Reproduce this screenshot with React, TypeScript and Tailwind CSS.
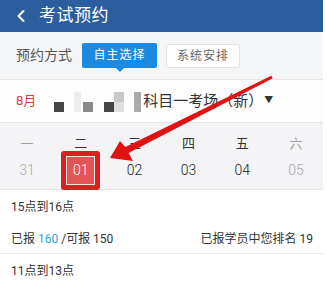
import { ChevronLeft } from 'lucide-react';

const weekdays = [
  { label: '一', tone: 'text-[#a0a0a0]' },
  { label: '二', tone: 'text-[#333]' },
  { label: '三', tone: 'text-[#333]' },
  { label: '四', tone: 'text-[#333]' },
  { label: '五', tone: 'text-[#333]' },
  { label: '六', tone: 'text-[#a0a0a0]' },
];

const dates = ['31', '01', '02', '03', '04', '05'];

function CensorBlocks() {
  // pixelated name that was blurred out in the original screenshot
  return (
    <svg width="88" height="20" viewBox="0 0 88 20" className="shrink-0">
      <rect x="0" y="10" width="10" height="10" fill="#444" />
      <rect x="20" y="0" width="7" height="20" fill="#eee" />
      <rect x="29" y="10" width="10" height="10" fill="#8a8a8a" />
      <rect x="50" y="10" width="10" height="10" fill="#444" />
      <rect x="60" y="0" width="10" height="10" fill="#c8c8c8" />
      <rect x="60" y="10" width="10" height="10" fill="#dedede" />
      <rect x="80" y="0" width="7" height="20" fill="#aaa" />
    </svg>
  );
}

export default function App() {
  return (
    <div
      className="relative w-[327px] h-[293px] overflow-hidden bg-white"
      style={{ fontFamily: 'Roboto, "Noto Sans CJK SC", sans-serif' }}
    >
      <div className="w-[323px]">
        {/* Title bar */}
        <div className="h-[32px] bg-[#2c5e9f] flex items-center pl-[11px] gap-[8px] text-white">
          <ChevronLeft size={20} strokeWidth={2.5} />
          <span className="text-[17px] tracking-[0.5px]">考试预约</span>
        </div>

        {/* Booking mode */}
        <div className="h-[48px] bg-[#f5f6f8] flex items-center border-b border-[#e6e6e6]">
          <span className="ml-[16px] text-[14px] text-[#555]">预约方式</span>
          <div className="relative ml-[10px] mt-[-1px] w-[75px] h-[25px] rounded-[2px] bg-[#1d8ae2] flex items-center justify-center text-white text-[12px] tracking-[1px]">
            自主选择
            <span className="absolute left-1/2 -translate-x-1/2 top-full w-0 h-0 border-l-[4px] border-r-[4px] border-t-[4px] border-l-transparent border-r-transparent border-t-[#1d8ae2]" />
          </div>
          <div className="ml-[9px] w-[74px] h-[24px] bg-white border border-[#e2e2e2] rounded-[2px] flex items-center justify-center text-[12px] text-[#666] tracking-[1px]">
            系统安排
          </div>
        </div>

        {/* Month / venue */}
        <div className="h-[43px] bg-[#fdfdfd] flex items-center border-b border-[#e6e6e6]">
          <span className="ml-[16px] text-[13px] text-[#c9463f]">8月</span>
          <div className="ml-[18px] mt-[2px]">
            <CensorBlocks />
          </div>
          <span className="ml-[1px] text-[15px] text-[#333]">科目一考场（新）</span>
          <span className="ml-[1px] text-[9px] text-[#333]">▼</span>
        </div>

        {/* Week strip */}
        <div className="h-[67px] bg-[#f4f4f6] border-b border-[#e4e4e4] grid grid-cols-6">
          {weekdays.map((d, i) => (
            <div key={d.label} className="flex flex-col items-center">
              <span className={`mt-[12px] h-[18px] text-[13px] leading-[18px] ${d.tone}`}>{d.label}</span>
              <div className="mt-[-2px] h-[39px] flex items-center justify-center">
                {i === 1 ? (
                  <div className="w-[39px] h-[39px] rounded-[3px] bg-[#dc1f1f] p-[5px]">
                    <div className="w-full h-full border border-[#fbe3e3] bg-[#e45555] flex items-center justify-center text-white text-[14px] font-light">
                      {dates[i]}
                    </div>
                  </div>
                ) : (
                  <span
                    className={`text-[14px] font-light ${
                      i === 0 || i === 5 ? 'text-[#a8a8a8]' : 'text-[#222]'
                    }`}
                  >
                    {dates[i]}
                  </span>
                )}
              </div>
            </div>
          ))}
        </div>

        {/* Time slots */}
        <div className="bg-white text-[12px] text-[#333]">
          <div className="h-[34px] flex items-center pl-[11px]">15点到16点</div>
          <div className="h-[30px] flex items-center justify-between pl-[11px] pr-[10px] border-b border-[#e8e8e8]">
            <span>
              已报 <span className="text-[#27a0d6]">160</span> /可报 150
            </span>
            <span>已报学员中您排名 19</span>
          </div>
          <div className="h-[34px] flex items-center pl-[11px]">11点到13点</div>
        </div>
      </div>

      {/* Red annotation arrow drawn over the screenshot */}
      <svg className="absolute inset-0 pointer-events-none" width="327" height="293" viewBox="0 0 327 293">
        <polygon
          points="110,158 133,161 128.6,153.1 272.7,78.3 271.3,75.7 125.4,146.9 120,141"
          fill="#e11212"
        />
      </svg>
    </div>
  );
}
